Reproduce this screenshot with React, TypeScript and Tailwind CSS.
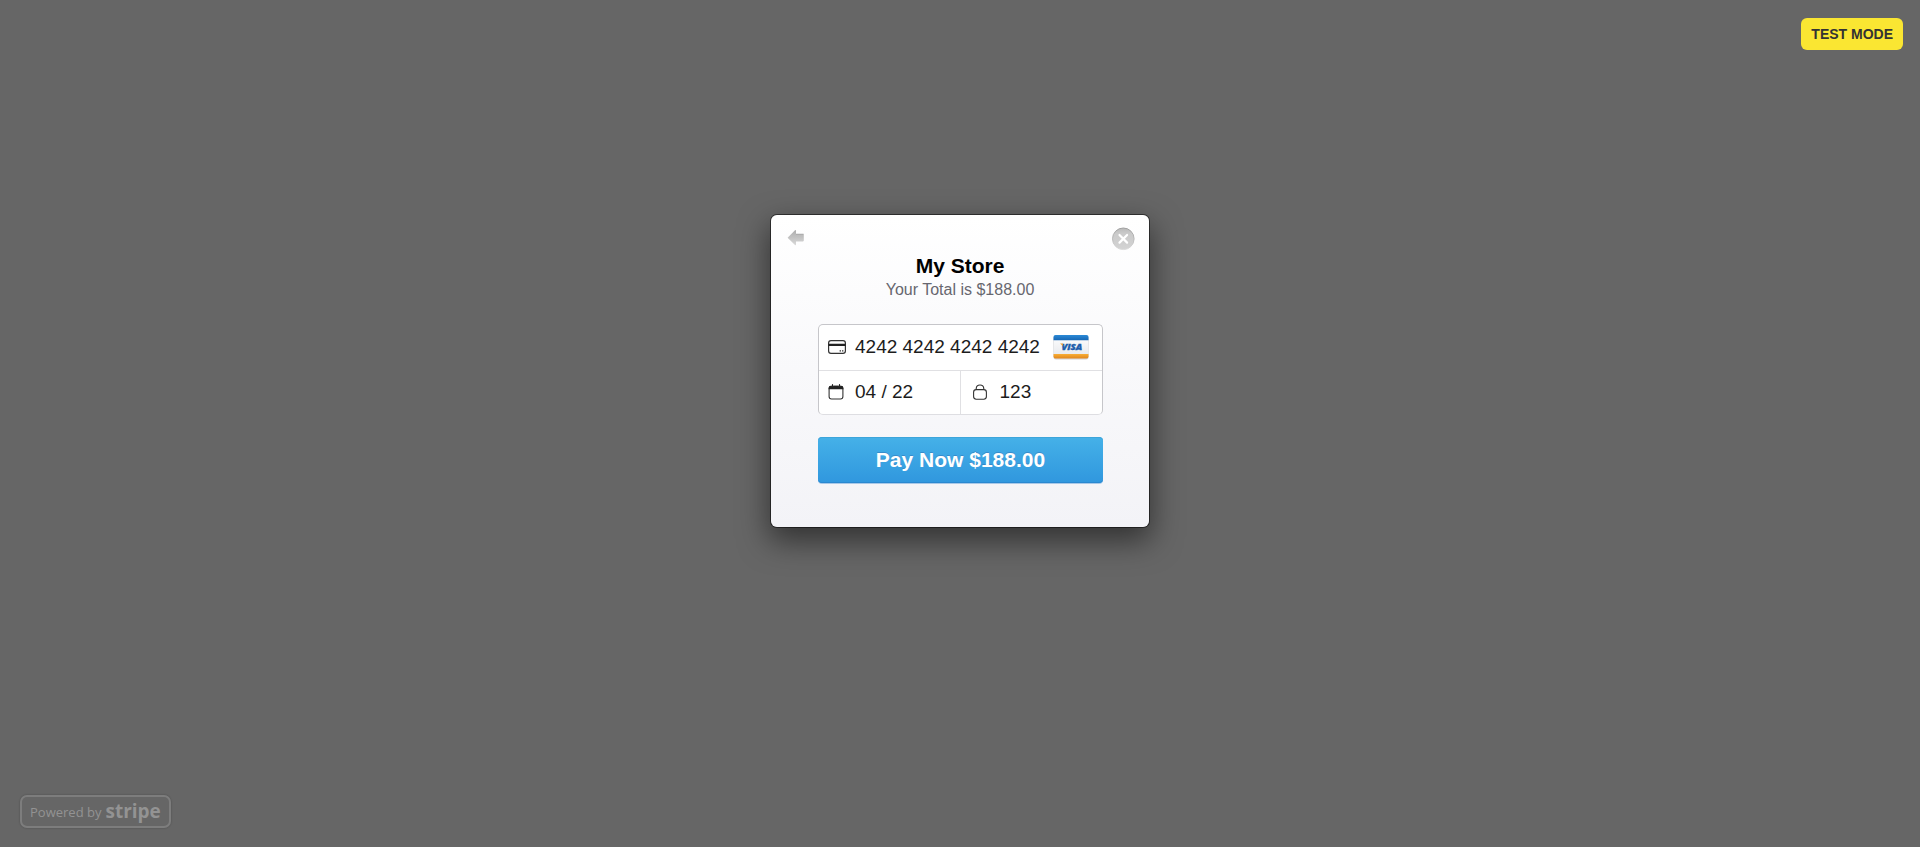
import React, { useState } from "react";

function BackIcon() {
  return (
    <svg width="18" height="18" viewBox="0 0 18 18" aria-hidden="true">
      <defs>
        <linearGradient id="back-fill" x1="0" y1="0" x2="0" y2="1">
          <stop offset="0" stopColor="#adadad" />
          <stop offset="0.5" stopColor="#c3c3c3" />
          <stop offset="1" stopColor="#dadada" />
        </linearGradient>
      </defs>
      <path d="M0.6 8.8 L8 1.3 Q9 0.6 9 1.8 V5 H16 Q16.8 5 16.8 5.8 V11.6 Q16.8 12.4 16 12.4 H9 V15.6 Q9 16.8 8 16.1 Z" fill="url(#back-fill)" />
      <path d="M9 5.2 H16.6" stroke="#a6a6a6" strokeWidth="0.8" />
    </svg>
  );
}

function CloseIcon() {
  return (
    <svg width="24" height="24" viewBox="0 0 24 24" aria-hidden="true">
      <defs>
        <linearGradient id="close-fill" x1="0" y1="0" x2="0" y2="1">
          <stop offset="0" stopColor="#b8b8b8" />
          <stop offset="0.25" stopColor="#cacaca" />
          <stop offset="1" stopColor="#d3d3d3" />
        </linearGradient>
        <linearGradient id="close-rim" x1="0" y1="0" x2="0" y2="1">
          <stop offset="0" stopColor="#a0a0a0" />
          <stop offset="0.5" stopColor="#b9b9b9" />
          <stop offset="1" stopColor="#dcdcdc" />
        </linearGradient>
      </defs>
      <circle cx="12.3" cy="11.8" r="10.8" fill="url(#close-fill)" stroke="url(#close-rim)" />
      <path d="M8.5 8 L16.1 15.6 M16.1 8 L8.5 15.6" stroke="#fff" strokeWidth="2.2" strokeLinecap="round" />
    </svg>
  );
}

function CardIcon() {
  return (
    <svg width="18" height="14" viewBox="0 0 18 14" fill="none" aria-hidden="true" className="shrink-0">
      <rect x="0.6" y="0.6" width="16.8" height="12.8" rx="2.4" stroke="#333" strokeWidth="1.2" />
      <path d="M0.5 4.9 H17.5" stroke="#222" strokeWidth="2.4" />
      <path d="M11.6 10.8 H13 M14 10.8 H15.4" stroke="#333" strokeWidth="1.2" />
    </svg>
  );
}

function CalendarIcon() {
  return (
    <svg width="16" height="16" viewBox="0 0 16 16" fill="none" aria-hidden="true" className="shrink-0">
      <rect x="1.1" y="2.4" width="13.8" height="12.6" rx="2.4" stroke="#333" strokeWidth="1.1" />
      <path d="M0.6 5.2 V4.2 Q0.6 1.8 3 1.8 H3.4 V2.8 H5.6 V1.8 H10.4 V2.8 H12.6 V1.8 H13 Q15.4 1.8 15.4 4.2 V5.2 Z" fill="#222" />
      <path d="M4.5 0.7 V2 M11.5 0.7 V2" stroke="#222" strokeWidth="1.2" strokeLinecap="round" />
    </svg>
  );
}

function LockIcon() {
  return (
    <svg width="14" height="16" viewBox="0 0 14 16" fill="none" aria-hidden="true" className="shrink-0">
      <rect x="0.6" y="5.6" width="12.8" height="9.6" rx="2.6" stroke="#333" strokeWidth="1.1" />
      <path d="M3.2 5.6 V4.6 Q3.4 1 7 1 Q10.6 1 10.8 4.6 V5.6" stroke="#333" strokeWidth="1.1" />
    </svg>
  );
}

function VisaBadge() {
  return (
    <svg width="36" height="26" viewBox="0 0 36 26" role="img" aria-label="Visa" className="shrink-0">
      <defs>
        <linearGradient id="visa-paper" x1="0" y1="0" x2="0" y2="1">
          <stop offset="0" stopColor="#ffffff" />
          <stop offset="1" stopColor="#e4e6ea" />
        </linearGradient>
        <linearGradient id="visa-blue" x1="0" y1="0" x2="0" y2="1">
          <stop offset="0" stopColor="#2b8ad6" />
          <stop offset="1" stopColor="#1767b5" />
        </linearGradient>
        <linearGradient id="visa-gold" x1="0" y1="0" x2="0" y2="1">
          <stop offset="0" stopColor="#f8ae35" />
          <stop offset="1" stopColor="#e0851c" />
        </linearGradient>
      </defs>
      <rect x="0.5" y="1.5" width="35" height="24" rx="2.5" fill="#cdcfd4" />
      <rect x="1" y="1" width="34" height="23.5" rx="2" fill="url(#visa-paper)" />
      <path d="M0.5 6.2 V3 Q0.5 1 2.5 1 H33.5 Q35.5 1 35.5 3 V6.2 Z" fill="url(#visa-blue)" />
      <path d="M0.5 20 H35.5 V22.5 Q35.5 24.5 33.5 24.5 H2.5 Q0.5 24.5 0.5 22.5 Z" fill="url(#visa-gold)" />
      <text x="18.8" y="16.4" textAnchor="middle" fontFamily="'Open Sans', sans-serif" fontSize="9.5" fontWeight="800" fontStyle="italic" fill="#1c5dab" stroke="#1c5dab" strokeWidth="0.4">
        VISA
      </text>
      <path d="M7 9.4 H9.6 L10.4 12.2 Z" fill="#f0a02c" />
    </svg>
  );
}

type FieldProps = {
  label: string;
  icon: React.ReactNode;
  initial: string;
  className?: string;
  trailing?: React.ReactNode;
};

function Field({ label, icon, initial, className = "", trailing }: FieldProps) {
  const [value, setValue] = useState(initial);
  return (
    <label className={`flex min-w-0 items-center pb-0.5 ${className}`}>
      <span className="flex w-[27px] shrink-0 items-center">{icon}</span>
      <input
        aria-label={label}
        className="w-full min-w-0 bg-transparent text-[19px] leading-6 text-[#1c1c1c] outline-none"
        value={value}
        inputMode="numeric"
        onChange={(event) => setValue(event.target.value)}
      />
      {trailing}
    </label>
  );
}

export default function App() {
  return (
    <div className="relative flex min-h-screen flex-col bg-[#666] font-['Liberation_Sans',Arial,sans-serif]">
      <div className="absolute top-[18px] right-[17px] rounded-md bg-[#fae632] px-2.5 py-1.5 text-sm leading-5 font-bold text-[#333]">
        TEST MODE
      </div>

      <main className="flex flex-1 justify-center pt-[215px]">
        <section
          aria-label="Checkout"
          className="w-[378px] self-start rounded-md bg-linear-to-b from-white to-[#f3f3f7] pb-11 shadow-[0_0_0_1px_rgba(0,0,0,0.5),0_12px_30px_2px_rgba(0,0,0,0.5)]"
        >
          <header>
            <div className="flex h-[37px] items-start justify-between pt-3 pr-3.5 pl-4">
              <button type="button" aria-label="Back" className="pt-0.5">
                <BackIcon />
              </button>
              <button type="button" aria-label="Close">
                <CloseIcon />
              </button>
            </div>
            <h1 className="text-center text-[21px] leading-7 font-bold text-black">My Store</h1>
            <p className="text-center text-base leading-5 text-[#67676f]">Your Total is $188.00</p>
          </header>

          <form className="mt-6 mr-[46px] ml-[47px]" onSubmit={(event) => event.preventDefault()}>
            <div className="overflow-hidden rounded-[5px] border border-[#c6c6ca] border-b-[#dedee2] bg-white">
              <Field
                label="Card number"
                icon={<CardIcon />}
                initial="4242 4242 4242 4242"
                className="h-[46px] border-b border-[#e0e0e3] pr-[13px] pl-[9px]"
                trailing={<VisaBadge />}
              />
              <div className="grid grid-cols-2">
                <Field label="Expiry date" icon={<CalendarIcon />} initial="04 / 22" className="h-[43px] border-r border-[#e0e0e3] pl-[9px]" />
                <Field label="Security code" icon={<LockIcon />} initial="123" className="h-[43px] pl-3" />
              </div>
            </div>
            <button
              type="submit"
              className="mt-[22px] flex h-[46px] w-full items-center justify-center rounded-[4px] bg-linear-to-b from-[#45b1e8] to-[#3097de] text-[21px] leading-7 font-bold text-white shadow-[0_1px_0_#a9c9e8,inset_0_-1px_0_#2b88d0,inset_0_1px_0_#3da5da] [text-shadow:0_-1px_0_rgba(46,86,153,0.35)]"
            >
              Pay Now $188.00
            </button>
          </form>
        </section>
      </main>

      <footer className="flex px-5 pb-[19px]">
        <a
          href="#stripe"
          className="flex h-[33px] items-center gap-1 rounded-[7px] border-2 border-[#7d7d7d] px-2 font-['Open_Sans',sans-serif] text-[#939393] shadow-[0_0_2px_rgba(0,0,0,0.3)]"
        >
          <span className="text-[13px] leading-5 font-medium">Powered by</span>
          <span className="pb-0.5 text-[19px] leading-6 font-bold">stripe</span>
        </a>
      </footer>
    </div>
  );
}
